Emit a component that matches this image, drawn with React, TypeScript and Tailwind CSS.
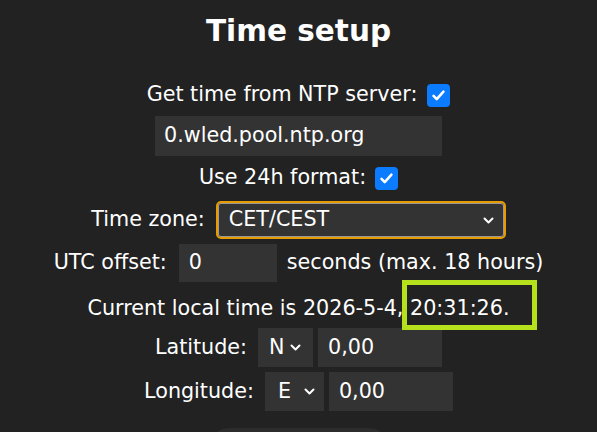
const font = { fontFamily: '"DejaVu Sans", Verdana, sans-serif' };

function Chev() {
  return (
    <svg viewBox="0 0 11 7" className="h-[7px] w-[11px]" fill="none" stroke="white" strokeWidth={2} strokeLinecap="round" strokeLinejoin="round">
      <path d="M1.5 1.5l4 4 4-4" />
    </svg>
  );
}

function Check() {
  return (
    <span className="inline-flex h-[23px] w-[23px] items-center justify-center rounded-[4px] bg-[#0b7bff]">
      <svg viewBox="0 0 24 24" className="h-[17px] w-[17px]" fill="none" stroke="white" strokeWidth={3.6} strokeLinecap="round" strokeLinejoin="round">
        <path d="M5 12.5l4.5 4.5L19 6.5" />
      </svg>
    </span>
  );
}

export default function App() {
  return (
    <div className="relative h-[432px] w-[597px] overflow-hidden bg-[#222222] text-[20.7px] text-white" style={font}>
      <div className="flex flex-col items-center">
        <h2 className="mt-[11px] h-[40px] text-[29.5px] leading-[40px] font-bold">Time setup</h2>

        <div className="mt-[29px] flex h-[30px] items-center gap-[10px]">
          <span>Get time from NTP server:</span>
          <Check />
        </div>

        <div className="mt-[6px] flex h-[40px] w-[287px] items-center bg-[#333333] pl-[9px]">0.wled.pool.ntp.org</div>

        <div className="mt-[7px] flex h-[30px] items-center gap-[9px]">
          <span>Use 24h format:</span>
          <Check />
        </div>

        <div className="mt-[8px] flex items-center gap-[11px]">
          <span>Time zone:</span>
          <span className="flex h-[38px] w-[290px] items-center justify-between rounded-[5px] border-2 border-[#e89b00] bg-[#333333] pr-[10px] pl-[11px] ring-1 ring-white/50 ring-inset">
            CET/CEST
            <Chev />
          </span>
        </div>

        <div className="mt-[5px] flex items-center">
          <span>UTC offset:</span>
          <span className="ml-[12px] flex h-[38px] w-[98px] items-center bg-[#333333] pl-[10px]">0</span>
          <span className="ml-[10px]">seconds (max. 18 hours)</span>
        </div>

        <div className="flex h-[46px] items-center pt-[7px]">Current local time is 2026-5-4, 20:31:26.</div>

        <div className="flex items-center">
          <span>Latitude:</span>
          <span className="ml-[11px] flex h-[39px] w-[55px] items-center gap-[5px] bg-[#333333] pl-[11px]">
            N
            <Chev />
          </span>
          <span className="ml-[5px] flex h-[39px] w-[124px] items-center bg-[#333333] pl-[10px]">0,00</span>
        </div>

        <div className="mt-[5px] flex items-center">
          <span>Longitude:</span>
          <span className="ml-[11px] flex h-[39px] w-[59px] items-center gap-[13px] bg-[#333333] pl-[13px]">
            E
            <Chev />
          </span>
          <span className="ml-[5px] flex h-[39px] w-[124px] items-center bg-[#333333] pl-[10px]">0,00</span>
        </div>

        <div className="mt-[17px] h-[40px] w-[180px] rounded-[20px] bg-[#2c2c2c]" />
      </div>

      <div className="absolute top-[280px] left-[402px] h-[50px] w-[135px] border-[5px] border-[#b5e01c]" />
    </div>
  );
}
